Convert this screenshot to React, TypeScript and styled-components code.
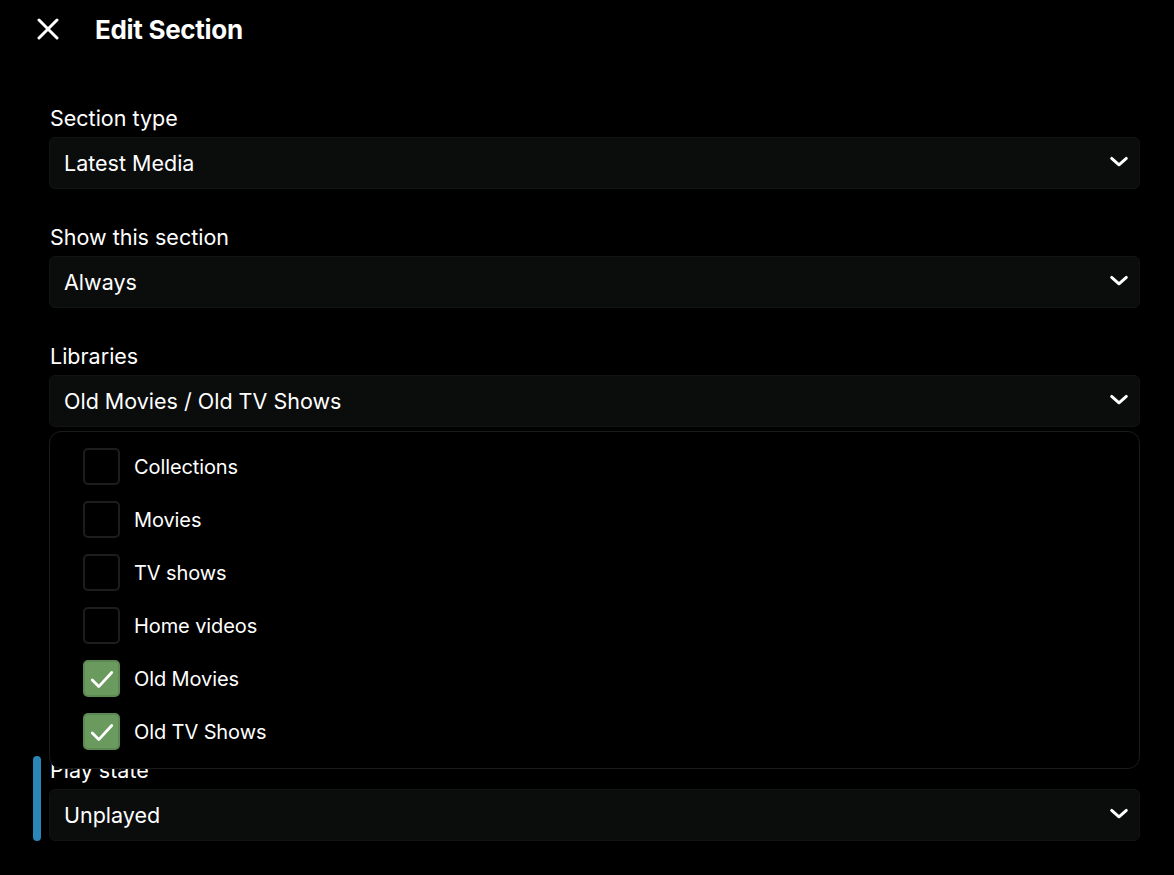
import React from 'react'
import styled, { createGlobalStyle } from 'styled-components'

const GlobalStyle = createGlobalStyle`
  html, body {
    margin: 0;
    background: #000;
    color: #fff;
    font-family: Inter, "Noto Sans", "Liberation Sans", sans-serif;
  }
`

const Page = styled.div`
  width: 1174px;
  height: 875px;
  overflow: hidden;
  background: #000;
`

const Header = styled.div`
  display: flex;
  align-items: center;
  gap: 36px;
  height: 58px;
  padding-left: 37px;
`

const CloseButton = styled.button`
  display: flex;
  padding: 0;
  border: 0;
  background: none;
  color: #fff;
  cursor: pointer;
`

const Title = styled.h1`
  margin: 0;
  font-size: 26px;
  font-weight: 700;
  letter-spacing: -0.3px;
`

const Form = styled.div`
  display: flex;
  flex-direction: column;
  gap: 34px;
  padding: 46px 34px 0 49px;
`

const Field = styled.div<{ $focused?: boolean }>`
  position: relative;
  display: flex;
  flex-direction: column;

  &::before {
    content: '';
    display: ${p => (p.$focused ? 'block' : 'none')};
    position: absolute;
    left: -16px;
    top: 0;
    bottom: 0;
    width: 8px;
    border-radius: 4px;
    background: #2b86b8;
  }
`

const Label = styled.label`
  height: 33px;
  padding-left: 1px;
  font-size: 21.5px;
  line-height: 28px;
`

const Select = styled.div`
  display: flex;
  align-items: center;
  justify-content: space-between;
  height: 52px;
  box-sizing: border-box;
  padding: 0 9px 0 14px;
  border: 1px solid #121414;
  border-radius: 6px;
  background: #0b0c0c;
  font-size: 21.5px;
`

const Spacer = styled.div`
  height: 261px;
`

const Dropdown = styled.div`
  position: absolute;
  z-index: 2;
  left: 0;
  right: 0;
  top: calc(100% + 4px);
  height: 338px;
  box-sizing: border-box;
  padding: 8px 33px 0;
  border: 1px solid #1a1c1c;
  border-radius: 12px;
  background: #000;
`

const Option = styled.div`
  display: flex;
  align-items: center;
  gap: 14px;
  height: 53px;
  font-size: 20px;
  letter-spacing: -0.1px;
`

const Box = styled.span<{ $checked: boolean }>`
  display: flex;
  align-items: center;
  justify-content: center;
  width: 37px;
  height: 37px;
  box-sizing: border-box;
  border: 2px solid ${p => (p.$checked ? '#5d8a52' : '#1c1e1e')};
  border-radius: 5px;
  background: ${p => (p.$checked ? '#6b9a5e' : '#000')};
`

function Chevron() {
  return (
    <svg width="22" height="22" viewBox="0 0 24 24" fill="none" stroke="#fff" strokeWidth="3.2" strokeLinecap="round" strokeLinejoin="round">
      <path d="M4 7l8 7 8-7" />
    </svg>
  )
}

function Check() {
  return (
    <svg width="26" height="26" viewBox="0 0 24 24" fill="none" stroke="#fff" strokeWidth="2.6" strokeLinecap="round" strokeLinejoin="round">
      <path d="M3 13l6 6L21 6" />
    </svg>
  )
}

const libraries = [
  { name: 'Collections', checked: false },
  { name: 'Movies', checked: false },
  { name: 'TV shows', checked: false },
  { name: 'Home videos', checked: false },
  { name: 'Old Movies', checked: true },
  { name: 'Old TV Shows', checked: true },
]

export default function App() {
  return (
    <Page>
      <GlobalStyle />
      <Header>
        <CloseButton>
          <svg width="22" height="22" viewBox="0 0 22 22" fill="none" stroke="#fff" strokeWidth="3" strokeLinecap="round">
            <path d="M2 2l18 18M20 2L2 20" />
          </svg>
        </CloseButton>
        <Title>Edit Section</Title>
      </Header>

      <Form>
        <Field>
          <Label>Section type</Label>
          <Select>
            Latest Media
            <Chevron />
          </Select>
        </Field>

        <Field>
          <Label>Show this section</Label>
          <Select>
            Always
            <Chevron />
          </Select>
        </Field>

        <Field>
          <Label>Libraries</Label>
          <Select>
            Old Movies / Old TV Shows
            <Chevron />
          </Select>
          <Dropdown>
            {libraries.map(lib => (
              <Option key={lib.name}>
                <Box $checked={lib.checked}>{lib.checked && <Check />}</Box>
                {lib.name}
              </Option>
            ))}
          </Dropdown>
        </Field>

        <Spacer />

        <Field $focused>
          <Label>Play state</Label>
          <Select>
            Unplayed
            <Chevron />
          </Select>
        </Field>
      </Form>
    </Page>
  )
}
